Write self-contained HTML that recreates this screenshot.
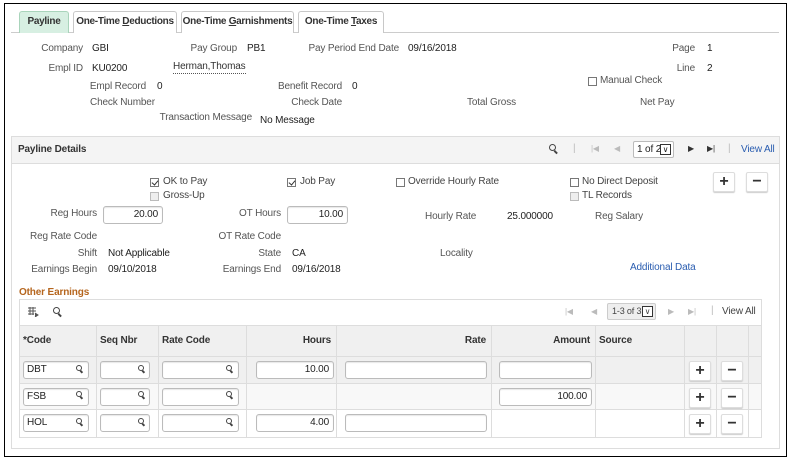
<!DOCTYPE html>
<html><head><meta charset="utf-8"><style>
*{box-sizing:border-box;margin:0;padding:0}
body{width:790px;height:461px;background:#fff;font-family:"Liberation Sans",Arial,sans-serif;font-size:10px;letter-spacing:-0.15px;color:#222;position:relative;overflow:hidden}
.a{position:absolute;white-space:nowrap;line-height:12px}
.l{color:#555}
.rt{text-align:right}
.tab{position:absolute;top:11px;height:22px;border:1px solid #c8c8c8;border-bottom:none;border-radius:3px 3px 0 0;background:#fff;font-size:10px;font-weight:bold;color:#333;text-align:center;line-height:20px;white-space:nowrap;letter-spacing:-0.3px}
.cb{position:absolute;width:9px;height:9px;border:1px solid #777;background:#fff}
.cb.dis{border-color:#bbb;background:#eee}
.cb.ck::after{content:"";position:absolute;left:2px;top:0px;width:3px;height:5px;border:solid #333;border-width:0 1.5px 1.5px 0;transform:rotate(40deg)}
.inp{position:absolute;height:18px;border:1px solid #bbb;border-radius:3px;background:#fff;text-align:right;padding-right:4px;line-height:16px;font-size:10px;box-shadow:inset 0 1px 1px #e6e6e6}
.btn{position:absolute;width:22px;height:20px;border:1px solid #ddd;border-radius:2px;background:#fff;box-shadow:0 1px 1px #ccc;font-weight:bold;font-size:16px;text-align:center;line-height:18px;color:#333}
.vl{position:absolute;width:1px;background:#ddd}
.hl{position:absolute;height:1px;background:#ddd}
.mag{position:absolute;width:7px;height:7px;border:1.5px solid #444;border-radius:50%}
.mag::after{content:"";position:absolute;left:5px;top:5px;width:4px;height:1.5px;background:#444;transform:rotate(45deg);transform-origin:0 0}
.sm{width:6px;height:6px}
.sm::after{left:4px;top:4px;width:3px}
.h{font-weight:bold;color:#333}
</style></head><body>
<div style="position:absolute;left:4px;top:3px;width:783px;height:454px;border:1px solid #000"></div>
<div class="hl" style="left:11px;top:32px;width:768px;background:#ccc"></div>
<div class="tab" style="left:19px;width:50px;background:#d7efe2;border-color:#a9d4bb">Payline</div>
<div class="tab" style="left:73px;width:104px">One-Time <u>D</u>eductions</div>
<div class="tab" style="left:181px;width:113px">One-Time <u>G</u>arnishments</div>
<div class="tab" style="left:298px;width:86px">One-Time <u>T</u>axes</div>

<div class="a l rt" style="left:20px;top:43px;width:63px">Company</div><div class="a" style="left:92px;top:43px">GBI</div>
<div class="a l rt" style="left:150px;top:43px;width:87px">Pay Group</div><div class="a" style="left:247px;top:43px">PB1</div>
<div class="a l rt" style="left:300px;top:43px;width:99px">Pay Period End Date</div><div class="a" style="left:408px;top:43px">09/16/2018</div>
<div class="a l rt" style="left:655px;top:43px;width:40px">Page</div><div class="a" style="left:707px;top:43px">1</div>
<div class="a l rt" style="left:20px;top:63px;width:63px">Empl ID</div><div class="a" style="left:92px;top:63px">KU0200</div>
<div class="a" style="left:173px;top:61px;border-bottom:1px dotted #555;color:#333">Herman,Thomas</div>
<div class="a l rt" style="left:655px;top:63px;width:40px">Line</div><div class="a" style="left:707px;top:63px">2</div>
<div class="cb" style="left:588px;top:77px"></div><div class="a l" style="left:600px;top:75px">Manual Check</div>
<div class="a l rt" style="left:80px;top:81px;width:66px">Empl Record</div><div class="a" style="left:157px;top:81px">0</div>
<div class="a l rt" style="left:262px;top:81px;width:80px">Benefit Record</div><div class="a" style="left:352px;top:81px">0</div>
<div class="a l" style="left:90px;top:97px">Check Number</div>
<div class="a l rt" style="left:262px;top:97px;width:80px">Check Date</div>
<div class="a l" style="left:467px;top:97px">Total Gross</div>
<div class="a l" style="left:640px;top:97px">Net Pay</div>
<div class="a l rt" style="left:150px;top:112px;width:102px">Transaction Message</div><div class="a" style="left:260px;top:115px">No Message</div>

<div style="position:absolute;left:11px;top:136px;width:769px;height:313px;border:1px solid #ddd"></div>
<div style="position:absolute;left:12px;top:137px;width:767px;height:27px;background:#f4f4f4;border-bottom:1px solid #ddd"></div>
<div class="a h" style="left:18px;top:144px">Payline Details</div>
<div class="mag" style="left:549px;top:144px"></div>
<div class="a" style="left:573px;top:143px;color:#bbb">|</div>
<div class="a" style="left:591px;top:143px;color:#bbb;font-size:8px">|◀</div>
<div class="a" style="left:614px;top:143px;color:#bbb;font-size:8px">◀</div>
<div style="position:absolute;left:633px;top:141px;width:41px;height:17px;border:1px solid #bbb;border-radius:2px;background:#fff;font-size:10px;line-height:15px;padding-left:3px;white-space:nowrap">1 of 2<span style="position:absolute;right:2px;top:2px;width:11px;height:11px;border:1px solid #333;font-size:8px;line-height:9px;text-align:center">∨</span></div>
<div class="a" style="left:688px;top:143px;color:#333;font-size:8px">▶</div>
<div class="a" style="left:707px;top:143px;color:#333;font-size:8px">▶|</div>
<div class="a" style="left:728px;top:143px;color:#bbb">|</div>
<div class="a" style="left:741px;top:144px;color:#2a5db0">View All</div>

<div class="cb ck" style="left:150px;top:178px"></div><div class="a" style="left:163px;top:176px;color:#444">OK to Pay</div>
<div class="cb ck" style="left:287px;top:178px"></div><div class="a" style="left:300px;top:176px;color:#444">Job Pay</div>
<div class="cb" style="left:396px;top:178px"></div><div class="a" style="left:408px;top:176px;color:#444">Override Hourly Rate</div>
<div class="cb" style="left:570px;top:178px"></div><div class="a" style="left:582px;top:176px;color:#444">No Direct Deposit</div>
<div class="cb dis" style="left:150px;top:192px"></div><div class="a" style="left:163px;top:190px;color:#444">Gross-Up</div>
<div class="cb dis" style="left:570px;top:192px"></div><div class="a" style="left:582px;top:190px;color:#444">TL Records</div>
<div class="btn" style="left:713px;top:172px">+</div><div class="btn" style="left:746px;top:172px">−</div>
<div class="a l rt" style="left:20px;top:208px;width:77px">Reg Hours</div><div class="inp" style="left:103px;top:206px;width:60px">20.00</div>
<div class="a l rt" style="left:200px;top:208px;width:81px">OT Hours</div><div class="inp" style="left:287px;top:206px;width:61px">10.00</div>
<div class="a l" style="left:425px;top:211px">Hourly Rate</div><div class="a" style="left:507px;top:211px">25.000000</div>
<div class="a l" style="left:595px;top:211px">Reg Salary</div>
<div class="a l rt" style="left:20px;top:231px;width:77px">Reg Rate Code</div>
<div class="a l rt" style="left:200px;top:231px;width:81px">OT Rate Code</div>
<div class="a l rt" style="left:20px;top:248px;width:77px">Shift</div><div class="a" style="left:108px;top:248px">Not Applicable</div>
<div class="a l rt" style="left:200px;top:248px;width:81px">State</div><div class="a" style="left:292px;top:248px">CA</div>
<div class="a l" style="left:440px;top:248px">Locality</div>
<div class="a l rt" style="left:20px;top:264px;width:77px">Earnings Begin</div><div class="a" style="left:108px;top:264px">09/10/2018</div>
<div class="a l rt" style="left:200px;top:264px;width:81px">Earnings End</div><div class="a" style="left:292px;top:264px">09/16/2018</div>
<div class="a" style="left:630px;top:262px;color:#2a5db0">Additional Data</div>
<div class="a" style="left:19px;top:287px;color:#b5651d;font-weight:bold">Other Earnings</div>

<div style="position:absolute;left:19px;top:299px;width:743px;height:139px;border:1px solid #ddd"></div>
<svg style="position:absolute;left:27px;top:306px" width="12" height="11" viewBox="0 0 12 11"><g fill="none" stroke="#555" stroke-width="1"><path d="M1 2h8M1 5h8M1 8h6M3 1v8M6 1v8"/><path d="M8 7l3 2-3 2" fill="#555"/></g></svg>
<div class="mag" style="left:53px;top:307px"></div>
<div class="a" style="left:565px;top:306px;color:#bbb;font-size:8px">|◀</div>
<div class="a" style="left:591px;top:306px;color:#bbb;font-size:8px">◀</div>
<div style="position:absolute;left:607px;top:303px;width:49px;height:17px;border:1px solid #ccc;background:#eee;border-radius:2px;font-size:9px;line-height:15px;padding-left:4px;color:#444;white-space:nowrap">1-3 of 3<span style="position:absolute;right:2px;top:2px;width:11px;height:11px;border:1px solid #333;font-size:8px;line-height:9px;text-align:center;background:#fff">∨</span></div>
<div class="a" style="left:668px;top:306px;color:#bbb;font-size:8px">▶</div>
<div class="a" style="left:688px;top:306px;color:#bbb;font-size:8px">▶|</div>
<div class="a" style="left:711px;top:305px;color:#bbb">|</div>
<div class="a" style="left:722px;top:306px;color:#444">View All</div>

<div style="position:absolute;left:20px;top:325px;width:741px;height:32px;background:#f0f0f0;border-top:1px solid #ddd;border-bottom:1px solid #ddd"></div>
<div style="position:absolute;left:20px;top:357px;width:741px;height:27px;background:#f0f0f0;border-bottom:1px solid #ddd"></div>
<div style="position:absolute;left:20px;top:384px;width:741px;height:26px;background:#f8f8f8;border-bottom:1px solid #ddd"></div>
<div class="vl" style="left:96px;top:325px;height:112px"></div>
<div class="vl" style="left:158px;top:325px;height:112px"></div>
<div class="vl" style="left:246px;top:325px;height:112px"></div>
<div class="vl" style="left:336px;top:325px;height:112px"></div>
<div class="vl" style="left:491px;top:325px;height:112px"></div>
<div class="vl" style="left:595px;top:325px;height:112px"></div>
<div class="vl" style="left:684px;top:325px;height:112px"></div>
<div class="vl" style="left:716px;top:325px;height:112px"></div>
<div class="vl" style="left:748px;top:325px;height:112px"></div>
<div class="a h" style="left:23px;top:335px">*Code</div>
<div class="a h" style="left:100px;top:335px">Seq Nbr</div>
<div class="a h" style="left:162px;top:335px">Rate Code</div>
<div class="a h rt" style="left:250px;top:335px;width:81px">Hours</div>
<div class="a h rt" style="left:340px;top:335px;width:146px">Rate</div>
<div class="a h rt" style="left:495px;top:335px;width:95px">Amount</div>
<div class="a h" style="left:599px;top:335px">Source</div>

<div class="inp" style="left:23px;top:361px;width:66px;text-align:left;padding-left:3px">DBT</div><div class="mag sm" style="left:76px;top:365px"></div>
<div class="inp" style="left:100px;top:361px;width:50px"></div><div class="mag sm" style="left:138px;top:365px"></div>
<div class="inp" style="left:162px;top:361px;width:77px"></div><div class="mag sm" style="left:226px;top:365px"></div>
<div class="inp" style="left:256px;top:361px;width:78px">10.00</div>
<div class="inp" style="left:345px;top:361px;width:142px"></div>
<div class="inp" style="left:499px;top:361px;width:93px"></div>
<div class="btn" style="left:689px;top:361px">+</div><div class="btn" style="left:721px;top:361px">−</div>

<div class="inp" style="left:23px;top:388px;width:66px;text-align:left;padding-left:3px">FSB</div><div class="mag sm" style="left:76px;top:391px"></div>
<div class="inp" style="left:100px;top:388px;width:50px"></div><div class="mag sm" style="left:138px;top:391px"></div>
<div class="inp" style="left:162px;top:388px;width:77px"></div><div class="mag sm" style="left:226px;top:391px"></div>
<div class="inp" style="left:499px;top:388px;width:93px">100.00</div>
<div class="btn" style="left:689px;top:388px">+</div><div class="btn" style="left:721px;top:388px">−</div>

<div class="inp" style="left:23px;top:414px;width:66px;text-align:left;padding-left:3px">HOL</div><div class="mag sm" style="left:76px;top:418px"></div>
<div class="inp" style="left:100px;top:414px;width:50px"></div><div class="mag sm" style="left:138px;top:418px"></div>
<div class="inp" style="left:162px;top:414px;width:77px"></div><div class="mag sm" style="left:226px;top:418px"></div>
<div class="inp" style="left:256px;top:414px;width:78px">4.00</div>
<div class="inp" style="left:345px;top:414px;width:142px"></div>
<div class="btn" style="left:689px;top:414px">+</div><div class="btn" style="left:721px;top:414px">−</div>
</body></html>
